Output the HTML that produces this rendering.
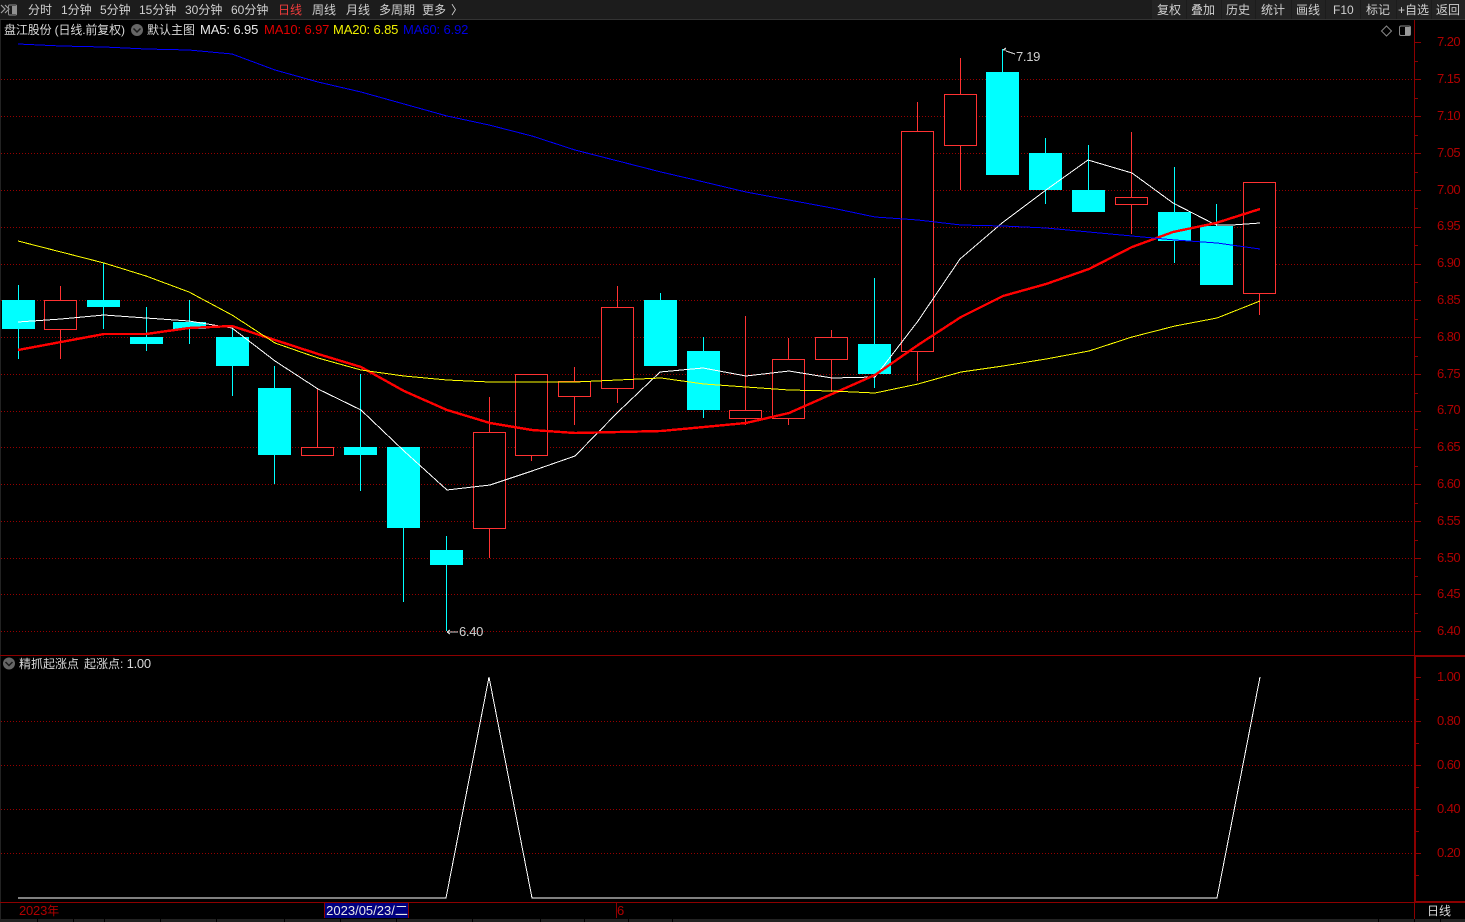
<!DOCTYPE html>
<html lang="zh"><head><meta charset="utf-8"><title>盘江股份</title>
<style>
html,body{margin:0;padding:0;background:#000;width:1465px;height:922px;overflow:hidden}
body{position:relative;font-family:"Liberation Sans","Noto Sans CJK SC",sans-serif;font-size:12px}
.t{position:absolute;white-space:nowrap;line-height:16px;height:16px}
.b{top:2px;color:#d0d0d0}
.a{font-size:13px;color:#b00000;left:1437px;letter-spacing:-.55px}
.n{font-size:13px;letter-spacing:-.12px}
svg{position:absolute;left:0;top:0}
</style></head><body>
<svg width="1465" height="922" viewBox="0 0 1465 922" fill="none" shape-rendering="crispEdges">
<rect x="0" y="0" width="1465" height="19" fill="#1c1c1c"/>
<rect x="0" y="19" width="1465" height="1" fill="#333"/>
<rect x="0" y="20" width="1" height="899" fill="#222"/>
<path fill="#232323" d="M1152 0h34v19h-34zM1187 0h34v19h-34zM1222 0h33v19h-33zM1256 0h35v19h-35zM1292 0h33v19h-33zM1326 0h34v19h-34zM1361 0h35v19h-35zM1397 0h34v19h-34zM1432 0h33v19h-33z"/>
<!-- grid -->
<path stroke="#960000" stroke-dasharray="1 2" d="M1 79.5H1414M1 116.5H1414M1 153.5H1414M1 190.5H1414M1 227.5H1414M1 264.5H1414M1 300.5H1414M1 337.5H1414M1 374.5H1414M1 411.5H1414M1 447.5H1414M1 484.5H1414M1 521.5H1414M1 558.5H1414M1 594.5H1414M1 631.5H1414M1 721.5H1414M1 765.5H1414M1 809.5H1414M1 853.5H1414"/>
<!-- axes -->
<path stroke="#8c0000" d="M1414.5 20V919M0 655.5H1414M0 902.5H1414"/>
<path fill="#8c0000" d="M1414 655h51v2h-51zM1415 655h1v247h-1zM1415 901h50v2h-50z"/>
<path stroke="#8c0000" d="M1415 42.5h6M1415 79.5h6M1415 116.5h6M1415 153.5h6M1415 190.5h6M1415 227.5h6M1415 264.5h6M1415 300.5h6M1415 337.5h6M1415 374.5h6M1415 411.5h6M1415 447.5h6M1415 484.5h6M1415 521.5h6M1415 558.5h6M1415 594.5h6M1415 631.5h6M1415 61.5h3M1415 98.5h3M1415 135.5h3M1415 172.5h3M1415 208.5h3M1415 245.5h3M1415 282.5h3M1415 319.5h3M1415 356.5h3M1415 393.5h3M1415 429.5h3M1415 466.5h3M1415 503.5h3M1415 540.5h3M1415 576.5h3M1415 613.5h3M1416 677.5h5M1416 721.5h5M1416 765.5h5M1416 809.5h5M1416 853.5h5M1416 699.5h3M1416 743.5h3M1416 787.5h3M1416 831.5h3M1416 875.5h3"/>
<!-- red candles -->
<path stroke="#ff3232" fill="#000" d="M60.5 286V300M60.5 330V359M317.5 388V447M489.5 397V432M489.5 529V558M531.5 456V461M574.5 367V381M574.5 397V425M617.5 286V307M617.5 389V403M745.5 316V410M745.5 419V425M788.5 338V359M788.5 419V425M831.5 330V337M831.5 360V392M917.5 102V131M917.5 352V381M960.5 58V94M960.5 146V190M1131.5 132V197M1131.5 205V234M1259.5 294V315"/>
<path stroke="#ff3232" fill="#000" d="M44.5 300.5H76.5V329.5H44.5ZM301.5 447.5H333.5V455.5H301.5ZM473.5 432.5H505.5V528.5H473.5ZM515.5 374.5H547.5V455.5H515.5ZM558.5 381.5H590.5V396.5H558.5ZM601.5 307.5H633.5V388.5H601.5ZM729.5 410.5H761.5V418.5H729.5ZM772.5 359.5H804.5V418.5H772.5ZM815.5 337.5H847.5V359.5H815.5ZM901.5 131.5H933.5V351.5H901.5ZM944.5 94.5H976.5V145.5H944.5ZM1115.5 197.5H1147.5V204.5H1115.5ZM1243.5 182.5H1275.5V293.5H1243.5Z"/>
<!-- cyan candles -->
<path stroke="#00ffff" d="M18.5 285V359M103.5 263V329M146.5 307V351M189.5 300V344M232.5 329V396M274.5 366V484M360.5 374V491M403.5 447V602M446.5 536V631M660.5 293V300M703.5 337V418M874.5 278V388M1002.5 49V72M1045.5 138V204M1088.5 145V190M1174.5 167V263M1216.5 204V226"/>
<path fill="#00ffff" d="M2 300h33v29h-33zM87 300h33v7h-33zM130 337h33v7h-33zM173 322h33v7h-33zM216 337h33v29h-33zM258 388h33v67h-33zM344 447h33v8h-33zM387 447h33v81h-33zM430 550h33v15h-33zM644 300h33v66h-33zM687 351h33v59h-33zM858 344h33v30h-33zM986 72h33v103h-33zM1029 153h33v37h-33zM1072 190h33v22h-33zM1158 212h33v29h-33zM1200 226h33v59h-33z"/>
<!-- MAs -->
<polyline stroke="#ffffff" points="18,322 61,319 104,315 146,318 189,321 232,328 275,361 318,389 361,410 404,451 447,490 490,485 532,471 575,456 618,412 660,372 703,368 746,376 789,371 832,378 875,377 918,321 960,259 1002,223 1046,190 1088,160 1132,173 1173,203 1214,224 1217,225 1232,225 1260,223"/>
<polyline stroke="#ff0000" stroke-width="2.4" points="18,350 61,342 104,334 146,334 189,328 232,326 275,340 318,354 361,367 404,391 447,410 490,423 532,430 575,433 618,432 661,431 704,427 746,423 789,413 832,394 875,375 918,345 961,317 1003,296 1046,284 1089,269 1132,247 1173,232 1216,223 1260,209"/>
<polyline stroke="#ffff00" points="18,241 61,252 104,263 146,276 189,292 232,315 275,343 318,358 361,370 404,376 447,380 490,382 532,382 575,382 618,380 661,378 704,384 746,387 789,390 832,391 875,393 918,384 961,372 1003,366 1046,359 1089,351 1132,337 1175,326 1217,318 1260,301"/>
<polyline stroke="#0000ff" points="18,44 61,46 104,47 146,49 189,50 232,54 275,70 318,82 361,92 404,104 447,116 489,125 532,136 575,150 618,161 661,172 704,182 746,192 789,200 832,208 875,217 918,220 961,225 1003,226 1046,228 1089,232 1132,236 1175,240 1217,243 1260,249"/>
<!-- low panel line -->
<polyline stroke="#ffffff" points="18,898 446,898 489,677 532,898 1217,898 1260,677"/>
<!-- markers -->
<path stroke="#d0d0d0" d="M1003 50h3M1003 50l3 -2M1006 51l9 3M447 632h11M447 632l3 -2M447 632l3 2"/>
<!-- date -->
<rect x="325" y="903" width="84" height="15" fill="#000080"/>
<path stroke="#8c0000" d="M324.5 903V918M408.5 903V918M616.5 903V918"/>
<!-- bottom strip -->
<rect x="0" y="919" width="1465" height="3" fill="#222"/>
<path stroke="#000" d="M37.5 919V922M73.5 919V922M104.5 919V922M160.5 919V922M216.5 919V922M284.5 919V922M340.5 919V922M396.5 919V922M472.5 919V922M540.5 919V922M584.5 919V922M628.5 919V922M672.5 919V922M1378.5 919V922M1414.5 919V922M1440.5 919V922"/>
</svg>
<!-- icons (antialiased) -->
<svg width="1465" height="922" viewBox="0 0 1465 922" fill="none">
<path stroke="#a0a0a0" stroke-width="1.2" d="M1 5l4 4-4 4M5 5l4 4-4 4"/>
<rect x="8.5" y="5" width="8" height="10" rx="1" stroke="#909090"/>
<rect x="12" y="6" width="4" height="8" fill="#909090"/>
<circle cx="137" cy="30" r="6" fill="#666"/>
<path stroke="#1a1a1a" stroke-width="1.5" d="M133.5 28.5l3.5 3.5 3.5-3.5"/>
<circle cx="9" cy="663.5" r="6" fill="#666"/>
<path stroke="#1a1a1a" stroke-width="1.5" d="M5.5 662l3.5 3.5 3.5-3.5"/>
<path stroke="#888" d="M1386.5 26l5 5-5 5-5-5z"/>
<rect x="1399.5" y="26" width="11" height="9.5" rx="1.5" stroke="#888"/>
<rect x="1405" y="27" width="5" height="8" fill="#999"/>
</svg>
<div class="t b" style="left:28px">分时</div>
<div class="t b" style="left:61px">1分钟</div>
<div class="t b" style="left:100px">5分钟</div>
<div class="t b" style="left:139px">15分钟</div>
<div class="t b" style="left:185px">30分钟</div>
<div class="t b" style="left:231px">60分钟</div>
<div class="t b" style="left:278px;color:#f03c3c">日线</div>
<div class="t b" style="left:312px">周线</div>
<div class="t b" style="left:346px">月线</div>
<div class="t b" style="left:379px">多周期</div>
<div class="t b" style="left:422px">更多</div>
<div class="t b" style="left:451px">〉</div>
<div class="t b" style="left:1157px">复权</div>
<div class="t b" style="left:1191px">叠加</div>
<div class="t b" style="left:1226px">历史</div>
<div class="t b" style="left:1261px">统计</div>
<div class="t b" style="left:1296px">画线</div>
<div class="t b" style="left:1333px">F10</div>
<div class="t b" style="left:1366px">标记</div>
<div class="t b" style="left:1398px">+自选</div>
<div class="t b" style="left:1436px">返回</div>
<div class="t" style="left:4px;top:22px;color:#d8d8d8;letter-spacing:-.14px">盘江股份 (日线.前复权)</div>
<div class="t" style="left:147px;top:22px;color:#d8d8d8">默认主图</div>
<div class="t n" style="left:200px;top:22px;color:#e8e8e8">MA5: 6.95</div>
<div class="t n" style="left:264px;top:22px;color:#e00000">MA10: 6.97</div>
<div class="t n" style="left:333px;top:22px;color:#f0f000">MA20: 6.85</div>
<div class="t n" style="left:403px;top:22px;color:#0000e0">MA60: 6.92</div>
<div class="t a" style="top:34px">7.20</div>
<div class="t a" style="top:71px">7.15</div>
<div class="t a" style="top:108px">7.10</div>
<div class="t a" style="top:145px">7.05</div>
<div class="t a" style="top:182px">7.00</div>
<div class="t a" style="top:218px">6.95</div>
<div class="t a" style="top:255px">6.90</div>
<div class="t a" style="top:292px">6.85</div>
<div class="t a" style="top:329px">6.80</div>
<div class="t a" style="top:366px">6.75</div>
<div class="t a" style="top:402px">6.70</div>
<div class="t a" style="top:439px">6.65</div>
<div class="t a" style="top:476px">6.60</div>
<div class="t a" style="top:513px">6.55</div>
<div class="t a" style="top:550px">6.50</div>
<div class="t a" style="top:586px">6.45</div>
<div class="t a" style="top:623px">6.40</div>
<div class="t n" style="left:1016px;top:49px;color:#d0d0d0;letter-spacing:-.3px">7.19</div>
<div class="t n" style="left:459px;top:624px;color:#d0d0d0;letter-spacing:-.3px">6.40</div>
<div class="t" style="left:19px;top:656px;color:#d8d8d8">精抓起涨点</div>
<div class="t" style="left:84px;top:656px;color:#d8d8d8">起涨点: <span class="n" style="letter-spacing:-.3px">1.00</span></div>
<div class="t a" style="top:669px">1.00</div>
<div class="t a" style="top:713px">0.80</div>
<div class="t a" style="top:757px">0.60</div>
<div class="t a" style="top:801px">0.40</div>
<div class="t a" style="top:845px">0.20</div>
<div class="t" style="left:19px;top:903px;color:#b00000;font-size:13px;letter-spacing:-.2px">2023<span style="font-size:12px">年</span></div>
<div class="t" style="left:325px;top:903px;width:84px;text-align:center;color:#e8e8e8;font-size:13px">2023/05/23/二</div>
<div class="t" style="left:617px;top:903px;color:#b00000;font-size:13px">6</div>
<div class="t" style="left:1427px;top:903px;color:#d8d8d8">日线</div>
</body></html>
